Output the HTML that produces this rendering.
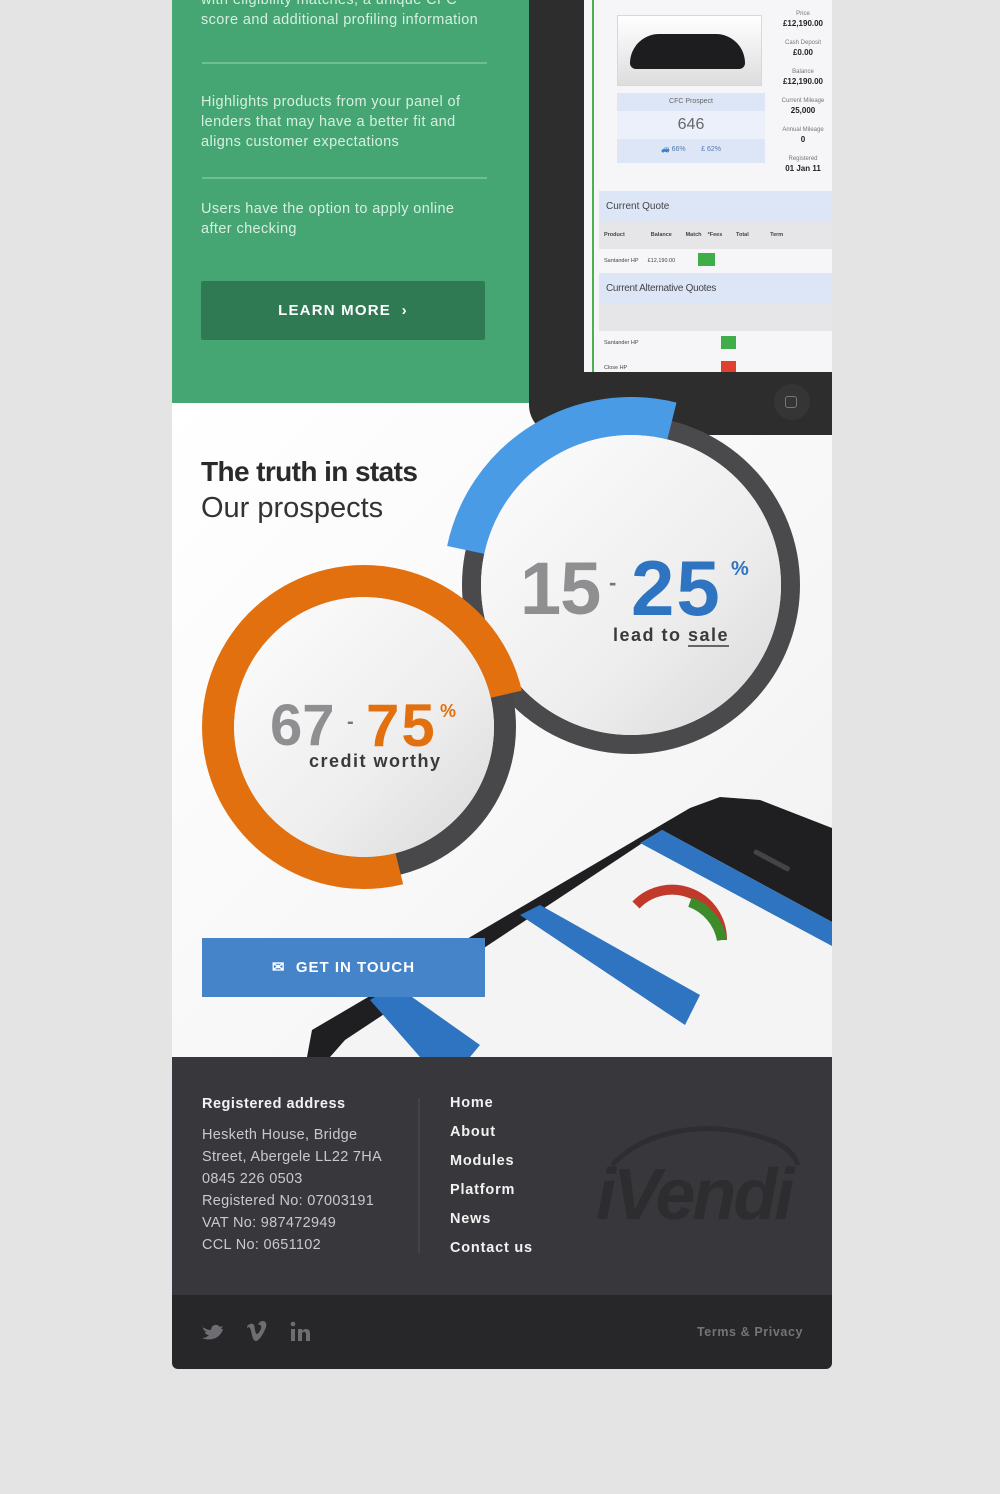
<!DOCTYPE html>
<html><head><meta charset="utf-8"><style>
*{margin:0;padding:0;box-sizing:border-box}
body{width:1000px;height:1494px;background:#e4e4e4;font-family:"Liberation Sans",sans-serif;position:relative;overflow:hidden}
.abs{position:absolute}
.g{color:#d6efe0;font-size:14.5px;line-height:20px;letter-spacing:.4px}
.hr{height:2px;background:#6fbd92;width:285px;left:202px}
.ft{color:#c9c9cc;font-size:14.5px;line-height:22px;letter-spacing:.3px}
.nav{color:#f2f2f2;font-weight:bold;font-size:14.5px;letter-spacing:.8px;left:450px}
.n{position:absolute;font-weight:bold;line-height:1;white-space:nowrap}
</style></head><body>
<div class="abs" style="left:172px;top:0;width:357px;height:403px;background:#45a673"></div>
<div class="abs" style="left:172px;top:403px;width:660px;height:654px;background:linear-gradient(135deg,#fff 0%,#f7f7f7 60%,#f0f0f0 100%)"></div>
<div class="abs" style="left:172px;top:1057px;width:660px;height:238px;background:#38383c"></div>
<div class="abs" style="left:172px;top:1295px;width:660px;height:74px;background:#27272a;border-radius:0 0 6px 6px"></div>

<div class="abs g" style="left:201px;top:-10px">with eligibility matches, a unique CFC<br>score and additional profiling information</div>
<div class="abs hr" style="top:62px"></div>
<div class="abs g" style="left:201px;top:92px">Highlights products from your panel of<br>lenders that may have a better fit and<br>aligns customer expectations</div>
<div class="abs hr" style="top:177px"></div>
<div class="abs g" style="left:201px;top:199px">Users have the option to apply online<br>after checking</div>
<div class="abs" style="left:201px;top:281px;width:284px;height:59px;background:#307a53;border-radius:2px;color:#fff;font-weight:bold;font-size:15px;letter-spacing:1.2px;text-align:center;line-height:60px">LEARN MORE &nbsp;›</div>

<div class="abs" style="left:529px;top:0;width:303px;height:435px;background:#2e2d2e;border-radius:0 0 0 30px"></div>
<div class="abs" style="left:584px;top:0;width:248px;height:372px;background:#f6f6f8;overflow:hidden;font-size:7px;color:#444">
  <div class="abs" style="left:8px;top:0;width:2px;height:372px;background:#4caf50"></div>
  <div class="abs" style="left:33px;top:15px;width:145px;height:71px;background:linear-gradient(#fff,#ddd);border:1px solid #cfd8ee"><div style="margin:18px 0 0 12px;width:115px;height:35px;background:#1d1d1f;border-radius:40px 40px 8px 8px"></div></div>
  <div class="abs" style="left:33px;top:93px;width:148px;height:70px;background:#dde6f7;text-align:center"><div style="line-height:18px;font-size:7px;color:#666">CFC Prospect</div><div style="background:#ebf0fb;font-size:16px;color:#666;line-height:28px">646</div><div style="font-size:7px;color:#5577aa;line-height:22px">🚙 66% &nbsp;&nbsp;&nbsp;&nbsp;&nbsp;&nbsp; £ 62%</div></div>
  <div class="abs" style="left:190px;top:10px;width:58px;text-align:center;font-size:6px;line-height:9px;color:#777">Price<br><b style="font-size:8px;color:#222">£12,190.00</b><br><br>Cash Deposit<br><b style="font-size:8px;color:#222">£0.00</b><br><br>Balance<br><b style="font-size:8px;color:#222">£12,190.00</b><br><br>Current Mileage<br><b style="font-size:8px;color:#222">25,000</b><br><br>Annual Mileage<br><b style="font-size:8px;color:#222">0</b><br><br>Registered<br><b style="font-size:8px;color:#222">01 Jan 11</b></div>
  <div class="abs" style="left:15px;top:191px;width:233px;height:31px;background:#dde6f7;font-size:10px;line-height:31px;padding-left:7px;color:#444">Current Quote</div>
  <div class="abs" style="left:15px;top:222px;width:233px;height:27px;background:#e6e6e8;font-size:5.5px;line-height:27px;padding-left:5px;font-weight:bold;white-space:nowrap">Product &nbsp;&nbsp;&nbsp;&nbsp;&nbsp;&nbsp;&nbsp;&nbsp;&nbsp;&nbsp;&nbsp;&nbsp;&nbsp;&nbsp;&nbsp; Balance &nbsp;&nbsp;&nbsp;&nbsp;&nbsp;&nbsp;&nbsp; Match &nbsp;&nbsp; *Fees &nbsp;&nbsp;&nbsp;&nbsp;&nbsp;&nbsp;&nbsp; Total &nbsp;&nbsp;&nbsp;&nbsp;&nbsp;&nbsp;&nbsp;&nbsp;&nbsp;&nbsp;&nbsp;&nbsp; Term</div>
  <div class="abs" style="left:15px;top:249px;width:233px;height:24px;font-size:5.5px;line-height:24px;padding-left:5px">Santander HP &nbsp;&nbsp;&nbsp;&nbsp; £12,190.00</div>
  <div class="abs" style="left:114px;top:253px;width:17px;height:13px;background:#3fae49"></div>
  <div class="abs" style="left:15px;top:273px;width:233px;height:31px;background:#dde6f7;font-size:10px;line-height:31px;padding-left:7px;color:#444;letter-spacing:-.3px">Current Alternative Quotes</div>
  <div class="abs" style="left:15px;top:304px;width:233px;height:27px;background:#e6e6e8"></div>
  <div class="abs" style="left:20px;top:331px;font-size:5.5px;line-height:24px">Santander HP</div>
  <div class="abs" style="left:20px;top:356px;font-size:5.5px;line-height:24px">Close HP</div>
  <div class="abs" style="left:137px;top:336px;width:15px;height:13px;background:#3fae49"></div>
  <div class="abs" style="left:137px;top:361px;width:15px;height:13px;background:#e04030"></div>
</div>
<div class="abs" style="left:774px;top:384px;width:36px;height:36px;border-radius:50%;background:#363536"></div>
<div class="abs" style="left:785px;top:396px;width:12px;height:12px;border:1.5px solid #777;border-radius:3px"></div>

<svg class="abs" style="left:0;top:0" width="1000" height="1494">
<defs>
<linearGradient id="wd" x1="0" y1="0" x2="1" y2="1"><stop offset="0" stop-color="#fdfdfd"/><stop offset=".6" stop-color="#eeeeee"/><stop offset="1" stop-color="#d9d9d9"/></linearGradient>
<clipPath id="cw"><rect x="172" y="403" width="660" height="654"/></clipPath>
</defs>
<g clip-path="url(#cw)">
<polygon points="307,1057 312,1030 690,808 720,797 760,800 832,828 832,1057" fill="#1f1f21"/>
<polygon points="330,1057 345,1040 662,830 832,922 832,1057" fill="#f4f4f4"/>
<polygon points="640,843 662,830 832,922 832,946" fill="#2f74c0"/>
<polygon points="520,915 540,905 700,995 685,1025" fill="#2f74c0"/>
<polygon points="370,1000 395,985 480,1045 470,1057 420,1057" fill="#2f74c0"/>
<path d="M636,905 A50,50 0 0 1 722,940" stroke="#c0392b" stroke-width="10" fill="none"/>
<path d="M690,902 A50,50 0 0 1 722,940" stroke="#3d8b2a" stroke-width="10" fill="none"/>
<rect x="752" y="858" width="40" height="5" rx="2" fill="#444" transform="rotate(28 772 860)"/>
</g>
<circle cx="631" cy="585" r="159.5" fill="none" stroke="#4a4a4d" stroke-width="19"/>
<path d="M465.7,549.9 A169,169 0 0 1 671.9,421" fill="none" stroke="#4a9be6" stroke-width="38"/>
<circle cx="631" cy="585" r="150" fill="url(#wd)"/>
<circle cx="364" cy="727" r="141" fill="none" stroke="#48484b" stroke-width="22"/>
<path d="M399.3,868.7 A146,146 0 1 1 506.3,694.2" fill="none" stroke="#e2700f" stroke-width="32"/>
<circle cx="364" cy="727" r="130" fill="url(#wd)"/>
<path d="M612,1165 C640,1135 700,1115 770,1140 C785,1145 795,1155 798,1165" stroke="#2e2e31" stroke-width="5" fill="none"/>
<path d="M202,1326 C205,1329 208,1330 211,1330 C211,1325 217,1323 220,1327 L223,1326 L221,1329 L223,1329 C221,1337 212,1342 202,1338 C206,1338 208,1336 209,1335 C206,1335 205,1333 205,1332 L207,1332 C204,1331 203,1329 203,1328 L205,1328 C203,1327 202,1325 202,1326Z" fill="#6e6e72"/>
<path d="M247,1327 C247,1325 252,1322 254,1325 C255,1328 255,1334 257,1334 C259,1334 262,1328 261,1326 C260,1324 258,1325 258,1325 C260,1319 268,1320 266,1327 C264,1333 259,1341 256,1341 C252,1341 252,1332 250,1328 C249,1326 247,1328 247,1328Z" fill="#6e6e72"/>
<rect x="291" y="1329" width="4" height="12" fill="#6e6e72"/><circle cx="293" cy="1324" r="2.3" fill="#6e6e72"/>
<path d="M298,1329 L302,1329 L302,1331 C304,1328 310,1328 310,1333 L310,1341 L306,1341 L306,1334 C306,1331 302,1331 302,1334 L302,1341 L298,1341Z" fill="#6e6e72"/>
</svg>

<div class="abs" style="left:201px;top:456px;font-size:28px;font-weight:bold;color:#2a2a2a;letter-spacing:-.6px">The truth in stats</div>
<div class="abs" style="left:201px;top:492px;font-size:29px;color:#333">Our prospects</div>

<div class="n" style="left:520px;top:552px;font-size:74px;color:#8f8f91;letter-spacing:-1px">15</div>
<div class="n" style="left:609px;top:572px;font-size:22px;color:#777">-</div>
<div class="n" style="left:631px;top:549px;font-size:78px;color:#2f74c0;letter-spacing:2px">25</div>
<div class="n" style="left:731px;top:559px;font-size:20px;color:#2f74c0">%</div>
<div class="abs" style="left:613px;top:625px;font-size:18px;font-weight:bold;color:#3a3a3a;letter-spacing:1.5px">lead to <span style="border-bottom:2px solid #666">sale</span></div>

<div class="n" style="left:270px;top:697px;font-size:58px;color:#8f8f91;letter-spacing:0">67</div>
<div class="n" style="left:347px;top:712px;font-size:20px;color:#777">-</div>
<div class="n" style="left:366px;top:696px;font-size:60px;color:#e2700f;letter-spacing:2px">75</div>
<div class="n" style="left:440px;top:702px;font-size:18px;color:#e2700f">%</div>
<div class="abs" style="left:309px;top:751px;font-size:18px;font-weight:bold;color:#3a3a3a;letter-spacing:1.5px">credit worthy</div>

<div class="abs" style="left:202px;top:938px;width:283px;height:59px;background:#4584c9;color:#fff;font-weight:bold;font-size:15px;letter-spacing:1px;text-align:center;line-height:60px">✉&nbsp; GET IN TOUCH</div>

<div class="abs" style="left:202px;top:1096px;color:#f2f2f2;font-weight:bold;font-size:14.5px;letter-spacing:.5px">Registered address</div>
<div class="abs ft" style="left:202px;top:1124px">Hesketh House, Bridge<br>Street, Abergele LL22 7HA<br>0845 226 0503<br>Registered No: 07003191<br>VAT No: 987472949<br>CCL No: 0651102</div>
<div class="abs" style="left:418px;top:1098px;width:2px;height:155px;background:#444448"></div>
<div class="abs nav" style="top:1095px">Home</div>
<div class="abs nav" style="top:1124px">About</div>
<div class="abs nav" style="top:1153px">Modules</div>
<div class="abs nav" style="top:1182px">Platform</div>
<div class="abs nav" style="top:1211px">News</div>
<div class="abs nav" style="top:1240px">Contact us</div>
<div class="abs" style="left:596px;top:1150px;font-size:72px;font-weight:bold;font-style:italic;color:#2d2d30;letter-spacing:-3px;line-height:90px">iVendi</div>
<div class="abs" style="left:697px;top:1325px;color:#747478;font-weight:bold;font-size:12.5px;letter-spacing:.6px">Terms &amp; Privacy</div>
</body></html>
